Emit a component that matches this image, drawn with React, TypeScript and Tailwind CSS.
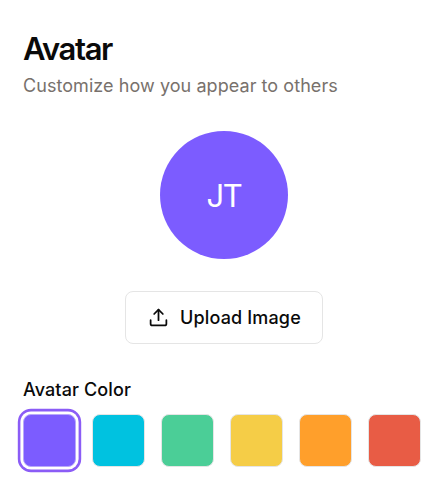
import React from "react";
import { Upload } from "lucide-react";

const colors = ["bg-[#7c5cff]", "bg-[#00c2e0]", "bg-[#4bce97]", "bg-[#f5cd47]", "bg-[#ff9f2b]", "bg-[#e85c45]"];

export default function App() {
  return (
    <main className="flex h-[498px] w-[442px] flex-col bg-white pl-[23px] font-['Inter',sans-serif] text-[#0a0a0a]">
      <h1 className="mt-[31px] h-9 text-[31px] leading-9 font-semibold tracking-[-1.4px]">Avatar</h1>
      <p className="mt-[5px] h-7 text-[18px] leading-7 tracking-[0.06px] text-[#78716c]">Customize how you appear to others</p>
      <div className="mt-[31px] ml-[137px] flex size-32 items-center justify-center rounded-full bg-[#7c5cff] pt-[2px] text-[31px] font-normal tracking-[-1.3px] text-white">
        JT
      </div>
      <button className="mt-8 ml-[102px] flex h-[53px] w-[198px] items-center justify-center gap-[11px] rounded-[8px] border border-[#e5e5e5] pl-px text-[18px] font-medium tracking-[0.15px]">
        <Upload size={21} strokeWidth={2} />
        <span>Upload Image</span>
      </button>
      <h2 className="mt-8 h-7 text-[18px] leading-7 font-medium tracking-[0.12px]">Avatar Color</h2>
      <div className="mt-[10px] flex gap-4">
        {colors.map((color, index) => (
          <button
            key={color}
            aria-label={`Color ${index + 1}`}
            className={`size-[53px] shrink-0 rounded-[8px] border ${color} ${index === 0 ? "border-[#b8a8fa] ring-[2.6px] ring-[#8b5cf6] ring-offset-[2.6px]" : "border-[#e5e5e5]"}`}
          />
        ))}
      </div>
    </main>
  );
}
